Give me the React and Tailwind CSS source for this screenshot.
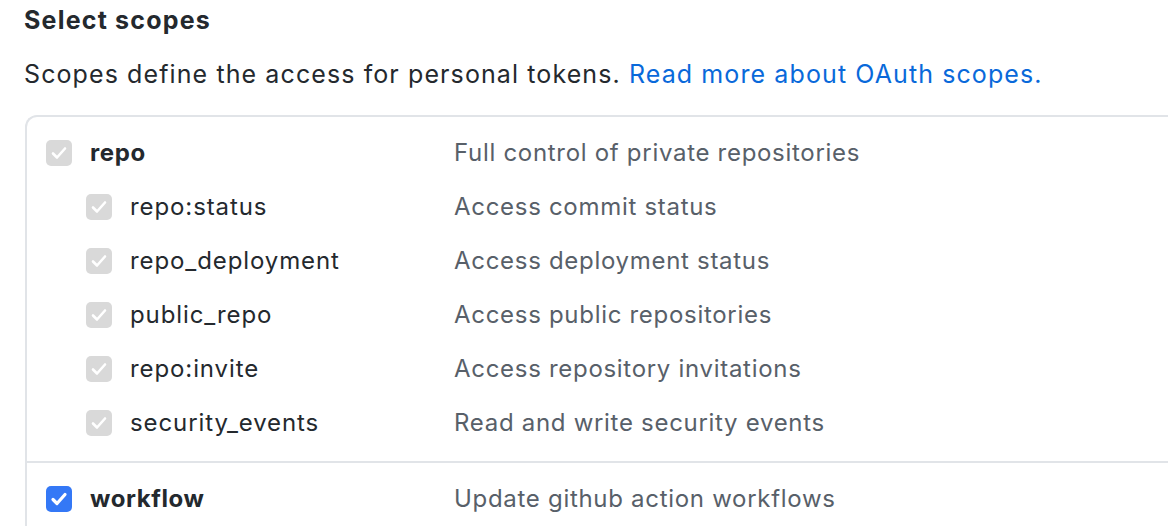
import React from 'react';

const scopes = [
    { name: 'repo:status', desc: 'Access commit status' },
    { name: 'repo_deployment', desc: 'Access deployment status' },
    { name: 'public_repo', desc: 'Access public repositories' },
    { name: 'repo:invite', desc: 'Access repository invitations' },
    { name: 'security_events', desc: 'Read and write security events' },
];

function CheckBox({ active }) {
    return (
        <span className={`flex h-[26px] w-[26px] shrink-0 items-center justify-center rounded-[5px] ${active ? 'bg-[#3478f6]' : 'bg-[#d9d9d9]'}`}>
            <svg width="20" height="20" viewBox="0 0 20 20" fill="none">
                <path d="M4 10.5l4 4 8-9" stroke="white" strokeWidth={active ? 3.2 : 2.6} strokeLinecap="round" strokeLinejoin="round" />
            </svg>
        </span>
    );
}

function ScopeRow({ name, desc, sub, bold, active }) {
    return (
        <div className="flex h-[54px] items-center text-[24px]">
            <div className={`flex w-[427px] items-center ${sub ? 'pl-[59px]' : 'pl-[19px]'}`}>
                <CheckBox active={active} />
                <span className={`ml-[18px] text-[#24292e] ${bold ? 'font-bold tracking-[0.6px]' : 'tracking-[0.9px]'}`}>{name}</span>
            </div>
            <span className="tracking-[0.7px] text-[#586069]">{desc}</span>
        </div>
    );
}

function App() {
    return (
        <div className="h-[532px] overflow-hidden bg-white pl-[24px] font-['Inter',sans-serif]">
            <h2 className="pt-[4px] text-[25px] font-bold leading-[32px] tracking-[1.2px] text-[#24292e]">Select scopes</h2>
            <p className="mt-[22px] text-[25px] leading-[32px] tracking-[1.1px] text-[#24292e]">
                Scopes define the access for personal tokens. <span className="text-[#0969da]">Read more about OAuth scopes.</span>
            </p>
            <div className="-mr-[40px] ml-[1px] mt-[25px] rounded-tl-[12px] border-l-2 border-t-2 border-[#e1e4e8]">
                <div className="pb-[11px] pt-[9px]">
                    <ScopeRow name="repo" desc="Full control of private repositories" bold />
                    {scopes.map((s) => (
                        <ScopeRow key={s.name} name={s.name} desc={s.desc} sub />
                    ))}
                </div>
                <div className="border-t-2 border-[#e1e4e8] pt-[9px]">
                    <ScopeRow name="workflow" desc="Update github action workflows" bold active />
                </div>
            </div>
        </div>
    );
}

export default App;
